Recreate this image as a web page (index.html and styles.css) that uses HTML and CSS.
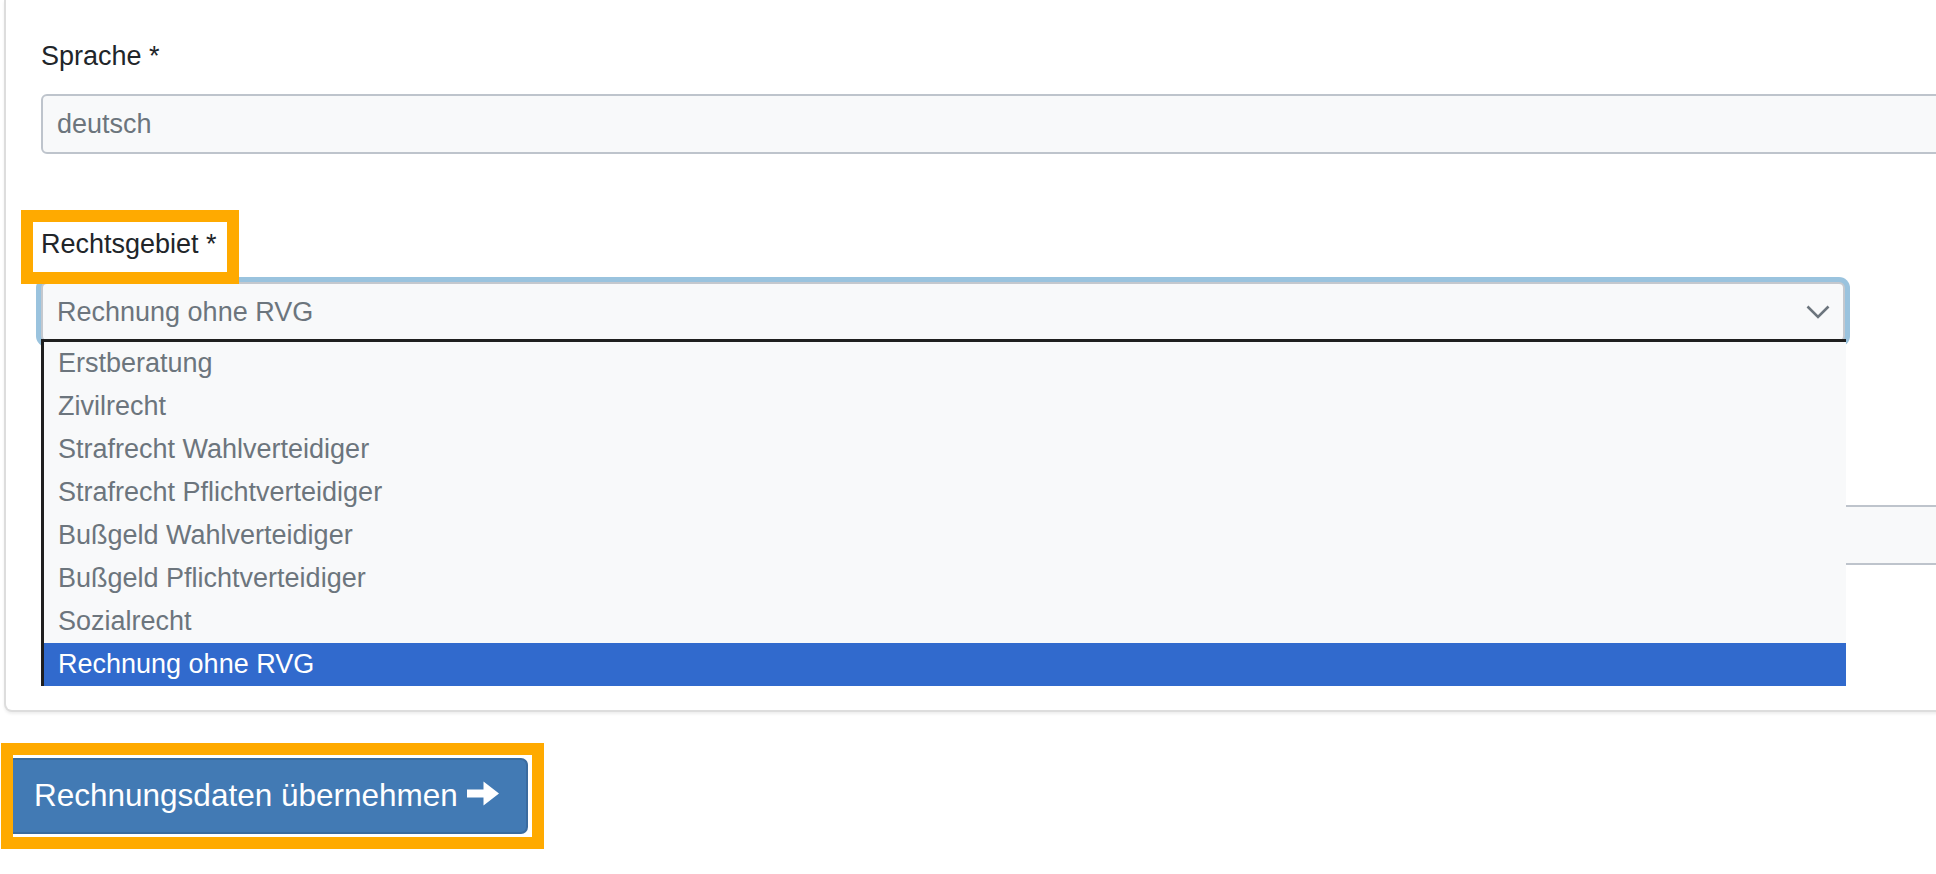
FILE: index.html
```html
<!DOCTYPE html>
<html lang="de">
<head>
<meta charset="utf-8">
<title>Rechnungsdaten</title>
<link rel="stylesheet" href="styles.css">
</head>
<body>
<div class="page">
  <div class="card">
    <div class="form-group">
      <div class="label-wrap"><label class="form-label">Sprache *</label></div>
      <div class="form-control">deutsch</div>
    </div>
    <div class="form-group">
      <div class="label-wrap">
        <label class="form-label">Rechtsgebiet *</label>
        <span class="highlight hl-label"></span>
      </div>
      <div class="select-wrap">
        <div class="form-select">
          <span>Rechnung ohne RVG</span>
          <svg class="chevron" width="24" height="14" viewBox="0 0 24 14"><polyline points="1.5,1.5 12,12 22.5,1.5" fill="none" stroke="#6c757d" stroke-width="2.6"/></svg>
        </div>
        <ul class="dropdown">
          <li class="option">Erstberatung</li>
          <li class="option">Zivilrecht</li>
          <li class="option">Strafrecht Wahlverteidiger</li>
          <li class="option">Strafrecht Pflichtverteidiger</li>
          <li class="option">Bußgeld Wahlverteidiger</li>
          <li class="option">Bußgeld Pflichtverteidiger</li>
          <li class="option">Sozialrecht</li>
          <li class="option selected">Rechnung ohne RVG</li>
        </ul>
      </div>
    </div>
    <div class="form-group group-3">
      <div class="form-control"></div>
    </div>
  </div>
  <div class="actions">
    <button class="btn" type="button">Rechnungsdaten übernehmen<svg class="arrow" width="32" height="25" viewBox="0 0 32 25"><path d="M0 8.5H16.5V0.5L32 12.5L16.5 24.5V16.5H0Z" fill="#ffffff"/></svg></button>
    <span class="highlight hl-btn"></span>
  </div>
</div>
</body>
</html>
```

FILE: styles.css
```css
html {
  overflow: hidden;
}

html, body {
  margin: 0;
  padding: 0;
  background: #ffffff;
}

body {
  font-family: "Liberation Sans", Arial, sans-serif;
  color: #212529;
}

.page {
  width: 2100px;
  padding-bottom: 40px;
}

.card {
  margin-left: 4px;
  width: 2060px;
  background: #ffffff;
  border: 2px solid #dddddd;
  border-top: none;
  border-radius: 0 0 8px 8px;
  box-shadow: 0 2px 3px rgba(0, 0, 0, 0.07);
  padding: 36px 0 145px 35px;
}

.form-group {
  margin-bottom: 70px;
}

.form-group.group-3 {
  margin-bottom: 0;
  padding-top: 93px;
}

.label-wrap {
  position: relative;
  margin-bottom: 18px;
}

.form-label {
  display: block;
  font-size: 27px;
  line-height: 40px;
  color: #212529;
}

.form-control {
  box-sizing: border-box;
  height: 60px;
  width: 2000px;
  border: 2px solid #bec4cc;
  border-radius: 6px;
  background: #f8f9fa;
  color: #6c757d;
  font-size: 27px;
  line-height: 56px;
  padding: 0 14px;
}

.select-wrap {
  position: relative;
  width: 1804px;
}

.form-select {
  box-sizing: border-box;
  height: 60px;
  width: 100%;
  display: flex;
  align-items: center;
  justify-content: space-between;
  border: 2px solid #c4c8ce;
  border-radius: 6px;
  background: #f8f9fa;
  color: #6c757d;
  font-size: 27px;
  padding: 0 13px 0 14px;
  box-shadow: 0 0 0 5px #9ac3de;
}

.chevron {
  display: block;
}

.dropdown {
  position: absolute;
  z-index: 5;
  top: 57px;
  left: 0;
  width: 1805px;
  box-sizing: border-box;
  margin: 0;
  padding: 0;
  list-style: none;
  background: #f8f9fa;
  border-top: 3px solid #1f1f1f;
  border-left: 3px solid #1f1f1f;
}

.option {
  height: 43px;
  line-height: 43px;
  font-size: 27px;
  color: #6c757d;
  padding-left: 14px;
}

.option.selected {
  background: #316acd;
  color: #ffffff;
}

.actions {
  position: relative;
  margin-top: 46px;
  padding-left: 4px;
}

.btn {
  position: relative;
  z-index: 1;
  display: flex;
  align-items: center;
  box-sizing: border-box;
  height: 76px;
  padding: 0 27px 2px 28px;
  border: 2px solid #3a6b9f;
  border-radius: 7px;
  background: #427ab4;
  color: #ffffff;
  font-family: "Liberation Sans", Arial, sans-serif;
  font-size: 31.5px;
  cursor: pointer;
}

.arrow {
  display: block;
  margin-left: 9px;
  margin-bottom: 3px;
}

.highlight {
  position: absolute;
  z-index: 10;
  box-sizing: border-box;
  border: 12px solid #ffaa00;
  pointer-events: none;
}

.hl-label {
  left: -20px;
  top: -14px;
  width: 218px;
  height: 74px;
}

.hl-btn {
  left: 1px;
  top: -15px;
  width: 543px;
  height: 106px;
}
```
